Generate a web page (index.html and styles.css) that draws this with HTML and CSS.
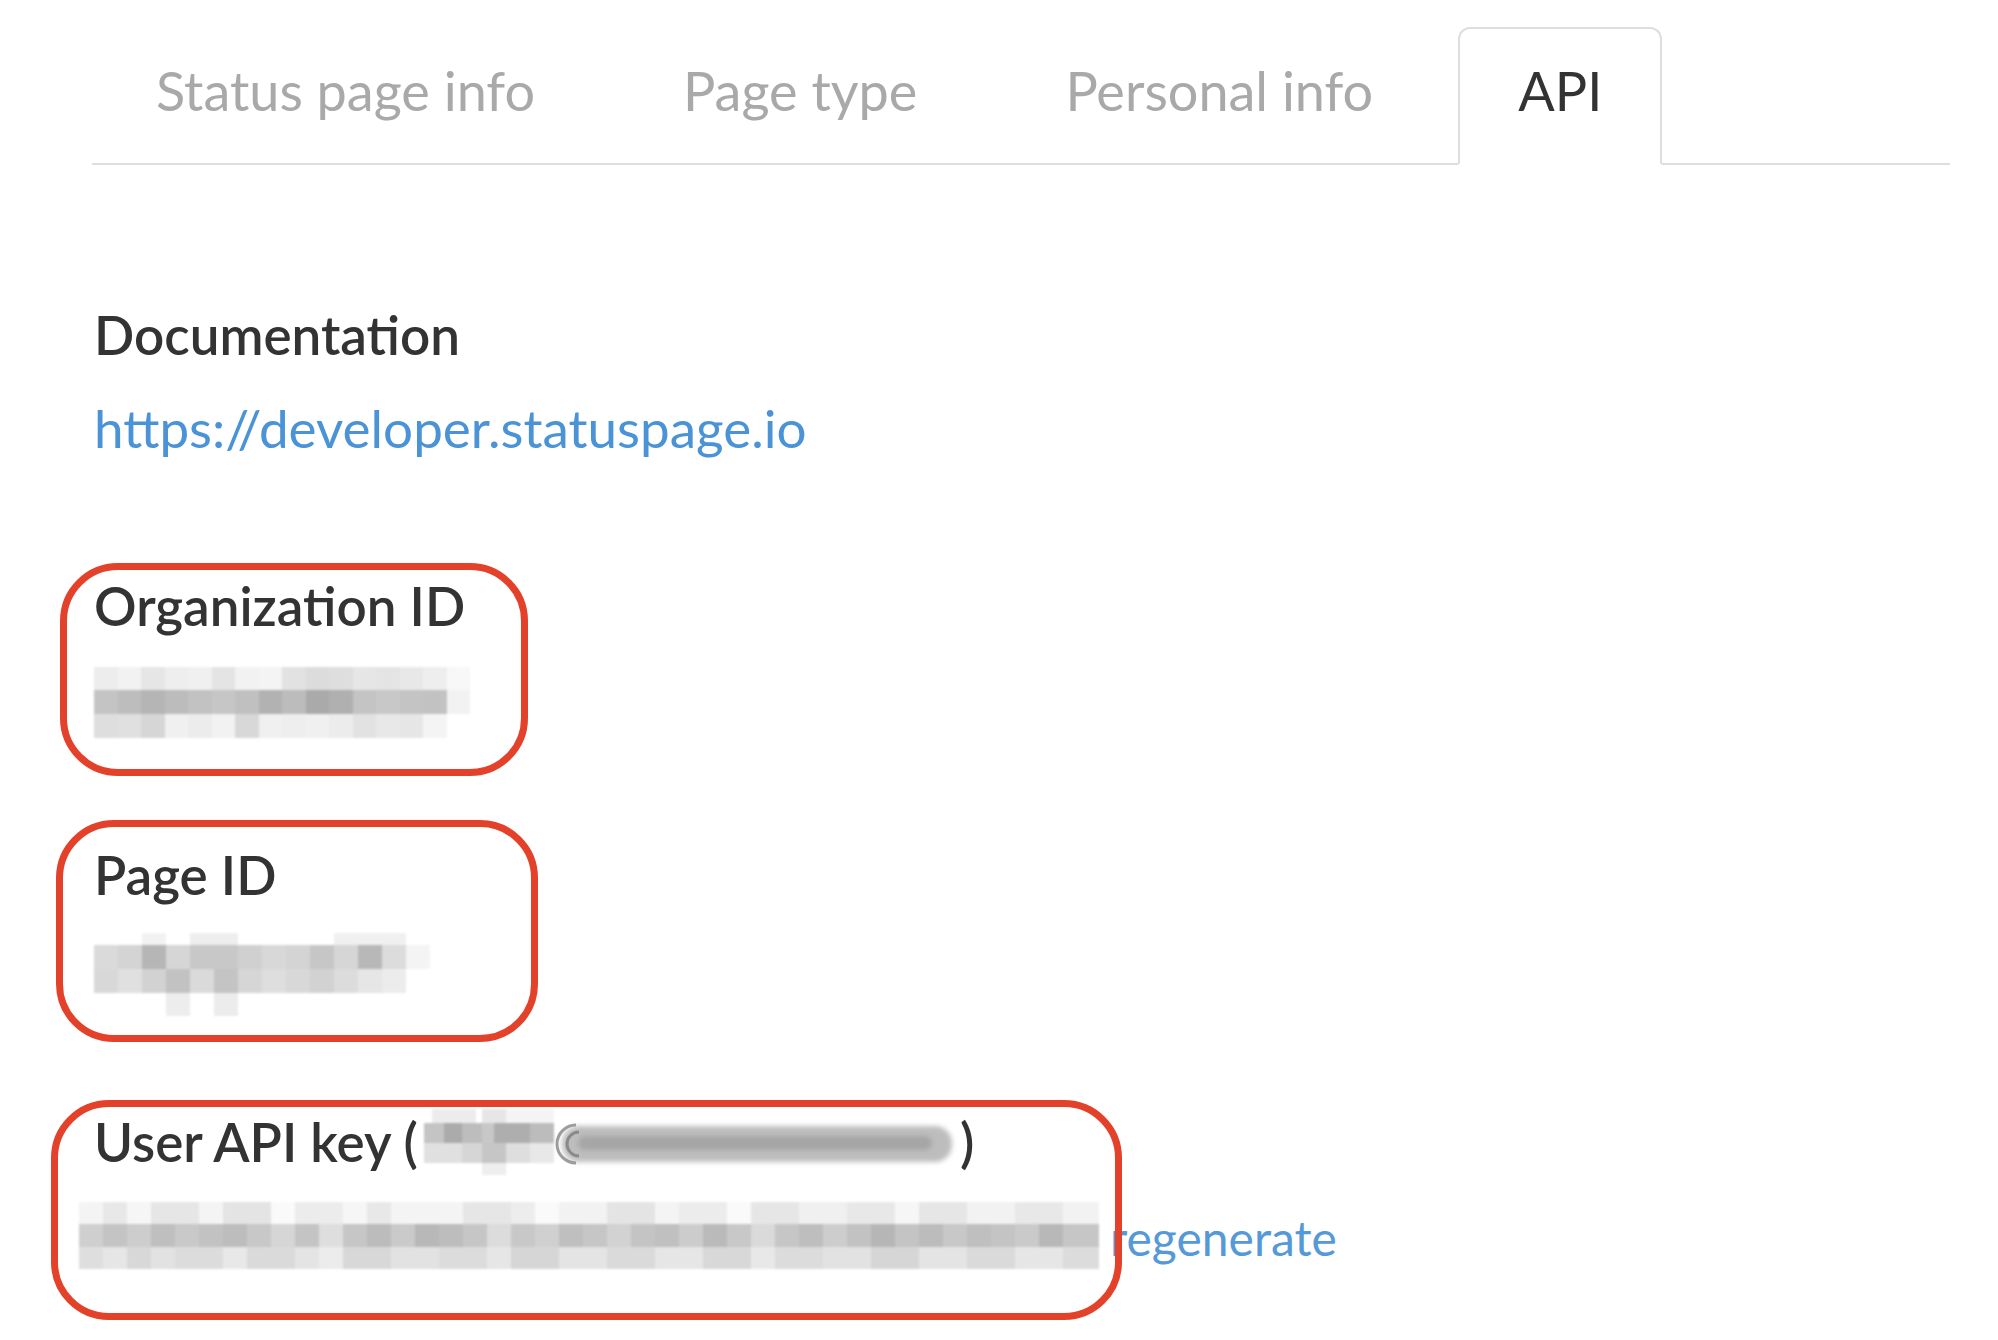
FILE: index.html
```html
<!DOCTYPE html>
<html lang="en">
<head>
<meta charset="UTF-8" />
<meta name="viewport" content="width=device-width,initial-scale=1" />
<title>API - Statuspage</title>
<link rel="stylesheet" href="styles.css">
</head>
<body>
  <div class="page">
    <nav class="tabs">
      <a class="tab" href="#">Status page info</a>
      <a class="tab" href="#">Page type</a>
      <a class="tab" href="#">Personal info</a>
      <a class="tab active" href="#">API</a>
    </nav>

    <main class="content">
      <section class="doc">
        <h3>Documentation</h3>
        <a class="link" href="#">https://developer.statuspage.io</a>
      </section>

      <!-- red marks are the annotation boxes round each id -->
      <section class="mark mark-org">
        <h3>Organization ID</h3>
        <div class="mosaic mosaic-org">
          <div class="org-1"></div>
          <div class="org-2"></div>
          <div class="org-3"></div>
        </div>
      </section>

      <section class="mark mark-page">
        <h3>Page ID</h3>
        <div class="mosaic mosaic-page">
          <div class="pg-0"></div>
          <div class="pg-1"></div>
          <div class="pg-2"></div>
          <div class="pg-3"></div>
        </div>
      </section>

      <div class="key-row">
        <section class="mark mark-key">
          <h3 class="key-title">
            <span>User API key (</span>
            <span class="mosaic mosaic-user">
              <span class="usr-1"></span>
              <span class="usr-2"></span>
              <span class="usr-3"></span>
            </span>
            <svg class="email" width="404" height="60" viewBox="0 0 404 60">
              <defs>
                <filter id="soft" x="-10%" y="-50%" width="120%" height="200%">
                  <feGaussianBlur stdDeviation="2.5" />
                </filter>
              </defs>
              <rect x="8" y="12" width="390" height="36" rx="17" fill="#bdbdbd" filter="url(#soft)" />
              <rect x="24" y="22" width="354" height="14" rx="7" fill="#a6a6a6" filter="url(#soft)" />
              <path d="M22 11 A19 19 0 0 0 22 49" fill="none" stroke="#9c9c9c" stroke-width="3" />
              <path d="M25 18 A12 12 0 0 0 25 42" fill="none" stroke="#8a8a8a" stroke-width="3" />
            </svg>
            <span>)</span>
          </h3>
          <div class="mosaic mosaic-key">
            <div class="key-1"></div>
            <div class="key-2"></div>
            <div class="key-3"></div>
          </div>
        </section>
        <a class="regen" href="#">regenerate</a>
      </div>
    </main>
  </div>
</body>
</html>
```

FILE: styles.css
```css
/* ---------- Base ---------- */
:root {
  --text: #333;
  --muted: #a9a9a9;
  --line: #dedede;
  --link: #4a93d6;
  --mark: #e3412a;
}
* { box-sizing: border-box; }
body {
  margin: 0;
  background: #fff;
  color: var(--text);
  font-family: Lato, "Open Sans", sans-serif;
}
a { text-decoration: none; }
h3 { margin: 0; font-size: 53px; line-height: 65px; font-weight: 600; }

/* ---------- Tabs ---------- */
.tabs {
  display: flex;
  align-items: flex-end;
  margin: 27px 48px 0 92px;
  border-bottom: 2px solid var(--line);
}
.tab {
  padding: 0 74px 10px;
  font-size: 54px;
  line-height: 124px;
  color: var(--muted);
}
.tab:first-child { padding-left: 64px; }
.tab.active {
  margin-left: 11px;
  padding: 0 58px 10px;
  color: var(--text);
  border: 2px solid var(--line);
  border-bottom-color: #fff;
  border-radius: 12px 12px 0 0;
  margin-bottom: -2px;
}

/* ---------- Content ---------- */
.content { padding: 137px 0 0 94px; }
.link {
  display: block;
  margin-top: 28px;
  font-size: 53px;
  line-height: 65px;
  color: var(--link);
}

.mark {
  position: relative;
  z-index: 1;
  border: 7px solid var(--mark);
  border-radius: 58px;
}
.mark-org { margin: 103px 0 0 -34px; padding: 3px 0 0 27px; width: 468px; height: 213px; }
.mark-page { margin: 44px 0 0 -38px; padding: 15px 0 0 31px; width: 482px; height: 222px; }
.mark-key { margin-left: -43px; padding: 2px 0 0 36px; width: 1071px; height: 220px; flex: none; }

.key-row { display: flex; align-items: flex-start; margin-top: 58px; }
.regen {
  margin: 108px 0 0 -12px;
  font-size: 48px;
  line-height: 60px;
  color: #5699d8;
}

/* ---------- Blurred values ---------- */
.mosaic { display: grid; filter: blur(1.2px); }
.mosaic-org { margin-top: 29px; width: 376px; grid-template-rows: 23px 24px 24px; }
.mosaic-page { margin-top: 26px; width: 336px; grid-template-rows: 12px 24px 24px 23px; }
.mosaic-key { margin: 28px 0 0 -15px; width: 1020px; grid-template-rows: 22px 23px 22px; }

.org-1 { background: linear-gradient(90deg, #ededed 0 23.5px, #f2f2f2 0 47px, #e6e6e6 0 70.5px, #eee 0 94px, #f0f0f0 0 117.5px, #e4e4e4 0 141px, #f2f2f2 0 164.5px, #f4f4f4 0 188px, #e2e2e2 0 211.5px, #dcdcdc 0 235px, #dedede 0 258.5px, #e6e6e6 0 282px, #e4e4e4 0 305.5px, #e8e8e8 0 329px, #eee 0 352.5px, #f8f8f8 0); }
.org-2 { background: linear-gradient(90deg, #c4c4c4 0 23.5px, #bdbdbd 0 47px, #b5b5b5 0 70.5px, #bcbcbc 0 94px, #c2c2c2 0 117.5px, #c6c6c6 0 141px, #c0c0c0 0 164.5px, #b2b2b2 0 188px, #bcbcbc 0 211.5px, #aaa 0 235px, #b0b0b0 0 258.5px, #c4c4c4 0 282px, #c8c8c8 0 305.5px, #c4c4c4 0 329px, #c2c2c2 0 352.5px, #f2f2f2 0); }
.org-3 { background: linear-gradient(90deg, #dedede 0 23.5px, #e0e0e0 0 47px, #d6d6d6 0 70.5px, #f0f0f0 0 94px, #ececec 0 117.5px, #f2f2f2 0 141px, #d8d8d8 0 164.5px, #f0f0f0 0 188px, #eee 0 211.5px, #f0f0f0 0 235px, #ececec 0 258.5px, #e2e2e2 0 282px, #e8e8e8 0 305.5px, #e6e6e6 0 329px, #f4f4f4 0 352.5px, #fff 0); }

.pg-0 { background: linear-gradient(90deg, #fff 0 48px, #f2f2f2 0 72px, #fff 0 96px, #eee 0 144px, #fff 0 240px, #f0f0f0 0 312px, #fff 0); }
.pg-1 { background: linear-gradient(90deg, #dadada 0 24px, #d4d4d4 0 48px, #b6b6b6 0 72px, #d6d6d6 0 96px, #c8c8c8 0 144px, #d0d0d0 0 168px, #d8d8d8 0 192px, #d4d4d4 0 216px, #c6c6c6 0 240px, #d6d6d6 0 264px, #b8b8b8 0 288px, #dcdcdc 0 312px, #f4f4f4 0); }
.pg-2 { background: linear-gradient(90deg, #d8d8d8 0 24px, #e0e0e0 0 48px, #d2d2d2 0 72px, #c2c2c2 0 96px, #dadada 0 120px, #c4c4c4 0 144px, #d6d6d6 0 168px, #dedede 0 192px, #d8d8d8 0 216px, #d2d2d2 0 240px, #dcdcdc 0 264px, #e6e6e6 0 288px, #ececec 0 312px, #fff 0); }
.pg-3 { background: linear-gradient(90deg, #fff 0 72px, #ededed 0 96px, #fff 0 120px, #ececec 0 144px, #fff 0); }

.usr-1, .usr-2, .usr-3 { display: block; }
.mosaic-user { width: 130px; margin-left: 6px; grid-template-rows: 14px 20px 20px 12px; filter: blur(1px); }
.usr-1 { background: linear-gradient(90deg, #fff 0 8px, #ececec 0 52px, #fff 0 58px, #e6e6e6 0 82px, #f4f4f4 0); }
.usr-2 { background: linear-gradient(90deg, #c4c4c4 0 20px, #ababab 0 38px, #bdbdbd 0 58px, #c8c8c8 0 70px, #aeaeae 0 106px, #bcbcbc 0); }
.usr-3 { background: linear-gradient(90deg, #e0e0e0 0 38px, #d6d6d6 0 58px, #c6c6c6 0 82px, #dedede 0 106px, #e8e8e8 0); }
.key-title { display: flex; align-items: center; height: 65px; }
.key-title .mosaic-user::after { content: ""; display: block; background: linear-gradient(90deg, #fff 0 58px, #eee 0 82px, #fff 0); }
.email { flex: none; margin: 4px 2px 0 0; }

.key-1 { background: linear-gradient(90deg, #f4f4f4 0 24px, #e8e8e8 0 48px, #f6f6f6 0 72px, #e6e6e6 0 120px, #f4f4f4 0 144px, #e4e4e4 0 192px, #fafafa 0 216px, #ececec 0 264px, #f6f6f6 0 288px, #e8e8e8 0 312px, #f4f4f4 0 384px, #e6e6e6 0 432px, #ededed 0 456px, #fafafa 0 480px, #f2f2f2 0 528px, #e4e4e4 0 576px, #f4f4f4 0 600px, #ececec 0 648px, #fafafa 0 672px, #e6e6e6 0 720px, #f0f0f0 0 768px, #e8e8e8 0 816px, #f6f6f6 0 840px, #e6e6e6 0 888px, #f2f2f2 0 936px, #e8e8e8 0 984px, #f2f2f2 0); }
.key-2 { background: linear-gradient(90deg, #cfcfcf 0 24px, #c4c4c4 0 48px, #cdcdcd 0 72px, #bfbfbf 0 96px, #c9c9c9 0 120px, #c2c2c2 0 144px, #bdbdbd 0 168px, #c8c8c8 0 192px, #d6d6d6 0 216px, #c4c4c4 0 240px, #dedede 0 264px, #c6c6c6 0 288px, #bcbcbc 0 312px, #cacaca 0 336px, #b8b8b8 0 360px, #bdbdbd 0 384px, #c6c6c6 0 408px, #dcdcdc 0 432px, #c8c8c8 0 456px, #d0d0d0 0 480px, #bfbfbf 0 504px, #c6c6c6 0 528px, #d2d2d2 0 552px, #c4c4c4 0 576px, #c0c0c0 0 600px, #ccc 0 624px, #bababa 0 648px, #c8c8c8 0 672px, #dadada 0 696px, #c6c6c6 0 720px, #bebebe 0 744px, #cdcdcd 0 768px, #c2c2c2 0 792px, #b6b6b6 0 816px, #c4c4c4 0 840px, #bcbcbc 0 864px, #c8c8c8 0 888px, #bfbfbf 0 912px, #c4c4c4 0 936px, #cacaca 0 960px, #b8b8b8 0 984px, #c6c6c6 0); }
.key-3 { background: linear-gradient(90deg, #dedede 0 24px, #e6e6e6 0 48px, #d8d8d8 0 72px, #e2e2e2 0 96px, #dcdcdc 0 144px, #e8e8e8 0 168px, #dadada 0 216px, #e4e4e4 0 240px, #ececec 0 264px, #d8d8d8 0 312px, #e2e2e2 0 360px, #dcdcdc 0 408px, #e6e6e6 0 432px, #d6d6d6 0 480px, #e4e4e4 0 528px, #dadada 0 576px, #e6e6e6 0 624px, #d8d8d8 0 672px, #e8e8e8 0 696px, #dcdcdc 0 744px, #e2e2e2 0 792px, #d6d6d6 0 840px, #e4e4e4 0 888px, #dadada 0 936px, #e6e6e6 0 984px, #dcdcdc 0); }
```
